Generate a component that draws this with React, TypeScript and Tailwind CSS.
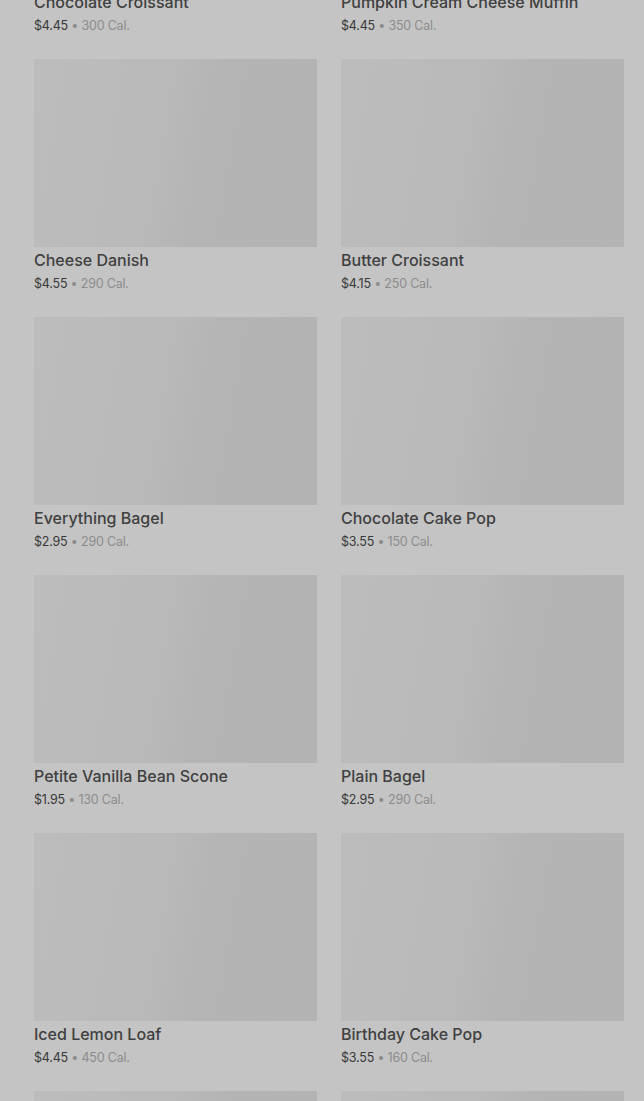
import React from "react";

const items: { name?: string; price?: string; cal?: string }[] = [
  { name: "Chocolate Croissant", price: "$4.45", cal: "300 Cal." },
  { name: "Pumpkin Cream Cheese Muffin", price: "$4.45", cal: "350 Cal." },
  { name: "Cheese Danish", price: "$4.55", cal: "290 Cal." },
  { name: "Butter Croissant", price: "$4.15", cal: "250 Cal." },
  { name: "Everything Bagel", price: "$2.95", cal: "290 Cal." },
  { name: "Chocolate Cake Pop", price: "$3.55", cal: "150 Cal." },
  { name: "Petite Vanilla Bean Scone", price: "$1.95", cal: "130 Cal." },
  { name: "Plain Bagel", price: "$2.95", cal: "290 Cal." },
  { name: "Iced Lemon Loaf", price: "$4.45", cal: "450 Cal." },
  { name: "Birthday Cake Pop", price: "$3.55", cal: "160 Cal." },
  {},
  {},
];

export default function App() {
  return (
    <div
      className="h-[1101px] w-[644px] overflow-hidden bg-[#c4c4c4]"
      style={{ fontFamily: "Inter, Roboto, sans-serif" }}
    >
      <div className="-mt-[199px] grid grid-cols-2 gap-x-6 gap-y-[23px] pl-[34px] pr-[20px]">
        {items.map((it, i) => (
          <div key={i} className="flex flex-col">
            <div className="h-[188px] w-full bg-[linear-gradient(100deg,#bcbcbc_0%,#b9b9b9_45%,#b4b4b4_60%,#b3b3b3_100%)]" />
            {it.name && (
              <>
                <div className="pt-[3px] text-[16px] leading-5 font-medium text-[#404040]">{it.name}</div>
                <div className="mt-[4px] text-[12.5px] leading-5 tracking-[-0.2px] text-[#383838]">
                  {it.price}
                  <span className="text-[#8c8c8c]"> • {it.cal}</span>
                </div>
              </>
            )}
          </div>
        ))}
      </div>
    </div>
  );
}
